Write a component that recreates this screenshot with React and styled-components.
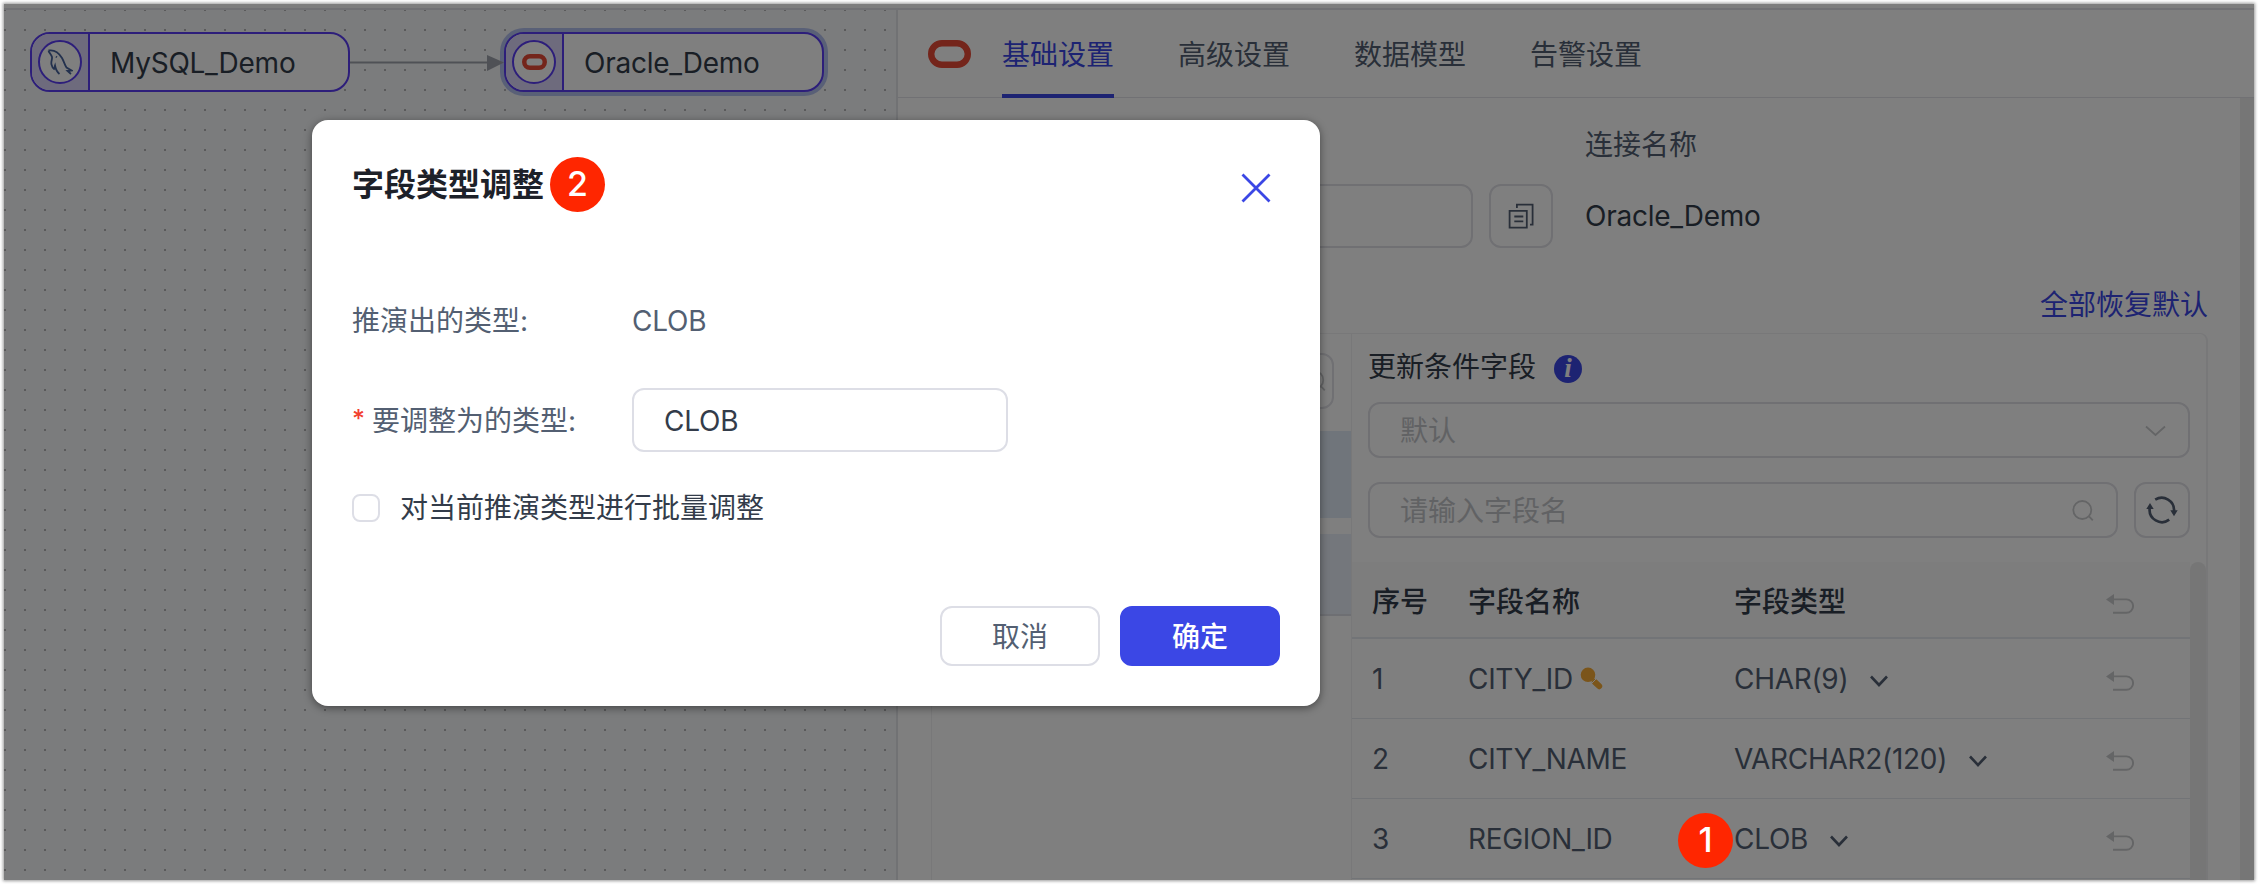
import React from "react";
import styled, { createGlobalStyle } from "styled-components";

const c = {
  primary: "#3b47e5",
  node: "#5a3cf5",
  text: "#333c4a",
  sub: "#535f72",
  border: "#dddee6",
  hint: "#c9cacc",
};

const GlobalStyle = createGlobalStyle`
  * { box-sizing: border-box; }
  body {
    margin: 0;
    background: #fff;
    overflow: hidden;
    font-family: Inter, "Noto Sans CJK SC", sans-serif;
    font-size: 28px;
    line-height: 40px;
    color: ${c.text};
  }
  svg { display: block; flex: none; }
  button, input { font: inherit; color: inherit; }
`;

const Screen = styled.div`
  width: 2258px;
  height: 884px;
  padding: 4px;
  overflow: hidden;
`;

const Window = styled.div`
  position: relative;
  display: flex;
  flex-direction: column;
  height: 876px;
  background: #fff;
  box-shadow: 0 0 3px 1px rgba(0, 0, 0, 0.4);
`;

const TopStrip = styled.div`
  flex: none;
  height: 6px;
  background: #fdfdfd;
  border-bottom: 2px solid #e5e5ea;
`;

const Workspace = styled.div`
  flex: 1;
  min-height: 0;
  display: flex;
  overflow: hidden;
`;

const Canvas = styled.div`
  position: relative;
  flex: none;
  width: 892px;
  background:
    linear-gradient(90deg, transparent 2px, #f7f8fa 2px) 0 -1px / 20px 20px,
    linear-gradient(#b4b5b7 2px, #f7f8fa 2px) 0 -1px / 20px 20px;
`;

const Node = styled.div`
  position: absolute;
  left: ${(p) => p.$x}px;
  top: 22px;
  width: 320px;
  height: 60px;
  display: flex;
  overflow: hidden;
  border: 2px solid ${c.node};
  border-radius: 20px;
  background: #fff;
`;

const Halo = styled.div`
  position: absolute;
  left: ${(p) => p.$x - 4}px;
  top: 18px;
  width: 328px;
  height: 68px;
  border-radius: 24px;
  background: #b3c0ee;
`;

const NodeSide = styled.div`
  width: 58px;
  display: flex;
  align-items: center;
  justify-content: center;
  background: #dcd6fb;
  border-right: 2px solid ${c.node};
`;

const NodeIcon = styled.div`
  width: 44px;
  height: 44px;
  display: flex;
  align-items: center;
  justify-content: center;
  border: 2px solid ${c.node};
  border-radius: 50%;
  background: #fff;
`;

const NodeName = styled.div`
  padding-left: 20px;
  line-height: 58px;
  letter-spacing: -0.25px;
`;

const Edge = styled.svg`
  position: absolute;
  left: 346px;
  top: 44px;
`;

const Panel = styled.div`
  flex: 1;
  display: flex;
  flex-direction: column;
  border-left: 2px solid #e3e4e8;
  background: #fff;
`;

const PanelHeader = styled.div`
  flex: none;
  height: 88px;
  padding-left: 30px;
  display: flex;
  border-bottom: 1px solid #e3e3e8;
`;

const HeaderLogo = styled.div`
  width: 74px;
  padding-top: 30px;
`;

const Tab = styled.div`
  height: 88px;
  margin-right: 64px;
  line-height: 90px;
  color: ${(p) => (p.$active ? c.primary : c.sub)};
  border-bottom: 4px solid ${(p) => (p.$active ? c.primary : "transparent")};
`;

const PanelMain = styled.div`
  flex: 1;
  min-height: 0;
  display: flex;
`;

const PanelBody = styled.div`
  flex: 1;
  padding: 26px 32px 0 33px;
`;

const ScrollTrack = styled.div`
  flex: none;
  width: ${(p) => p.$w}px;
  background: #ededed;
  border-radius: ${(p) => (p.$round ? "8px 8px 0 0" : 0)};
`;

const FormRow = styled.div`
  display: flex;
  gap: 32px;
`;

const Field = styled.div`
  display: flex;
  flex-direction: column;
  gap: 20px;
`;

const FieldLabel = styled.div`
  height: 40px;
  line-height: 42px;
  color: ${c.sub};
`;

const FieldLine = styled.div`
  display: flex;
  align-items: center;
  height: 64px;
  gap: 16px;
  letter-spacing: -0.25px;
`;

const Box = styled.div`
  display: flex;
  align-items: center;
  justify-content: space-between;
  width: ${(p) => p.$w}px;
  height: ${(p) => p.$h}px;
  padding: ${(p) => p.$pad || "0"};
  border: 2px solid #e0e0e6;
  border-radius: 12px;
  color: #c3c5c9;
`;

const IconButton = styled.button`
  display: flex;
  align-items: center;
  justify-content: center;
  flex: none;
  width: ${(p) => p.$s}px;
  height: ${(p) => p.$s}px;
  padding: 0;
  background: #fff;
  border: 2px solid #e0e0e6;
  border-radius: 12px;
`;

const ResetAll = styled.div`
  height: 40px;
  margin: 36px 0 9px;
  line-height: 42px;
  text-align: right;
  color: ${c.primary};
`;

const Group = styled.div`
  display: flex;
  height: 620px;
  border: 1px solid #f0f0f2;
  border-right-width: 2px;
  border-radius: 8px;
`;

const TableList = styled.div`
  width: 420px;
  border-right: 1px solid #f0f0f2;
  padding-top: 19px;
`;

const TableListSearch = styled.div`
  display: flex;
  padding: 0 17px 22px 17px;
`;

const TableItem = styled.div`
  height: ${(p) => p.$h}px;
  margin-bottom: 16px;
  background: ${(p) => p.$bg};
  border-bottom: ${(p) => (p.$line ? "2px solid #dcdfe6" : "0")};
`;

const FieldPane = styled.div`
  flex: 1;
  display: flex;
  flex-direction: column;
`;

const FieldTitle = styled.div`
  display: flex;
  align-items: center;
  gap: 18px;
  height: 64px;
  margin-bottom: 4px;
  padding: 2px 0 0 16px;
`;

const Info = styled.span`
  width: 28px;
  height: 28px;
  margin-top: 4px;
  border-radius: 50%;
  background: ${c.primary};
  color: #fff;
  font: italic bold 27px/26px "Liberation Serif", serif;
  text-align: center;
`;

const Controls = styled.div`
  display: flex;
  gap: 16px;
  padding: 0 16px 24px 16px;
`;

const TableWrap = styled.div`
  flex: 1;
  display: flex;
`;

const Table = styled.div`
  flex: 1;
`;

const Row = styled.div`
  display: grid;
  grid-template-columns: 96px 266px 1fr 28px;
  align-items: center;
  height: ${(p) => (p.$head ? 77 : 80)}px;
  padding: ${(p) => (p.$head ? 4 : 0)}px 56px 0 20px;
  color: ${(p) => (p.$head ? c.text : c.sub)};
  font-weight: ${(p) => (p.$head ? 500 : 400)};
  letter-spacing: ${(p) => (p.$head ? 0 : -0.3)}px;
  background: ${(p) => (p.$head ? "#fafafa" : "#fff")};
  border-bottom: ${(p) => (p.$head ? 2 : 1)}px solid #e4e8ee;
`;

const Cell = styled.div`
  display: flex;
  align-items: center;
  gap: ${(p) => p.$gap || 0}px;
`;

const CellIcon = styled.span`
  padding-top: 5px;
`;

const Mask = styled.div`
  position: absolute;
  inset: 0;
  padding: 116px 0 0 308px;
  background: rgba(0, 0, 0, 0.5);
`;

const Dialog = styled.div`
  width: 1008px;
  height: 586px;
  padding: 40px;
  display: flex;
  flex-direction: column;
  background: #fff;
  border-radius: 16px;
  box-shadow: 0 2px 8px rgba(0, 0, 0, 0.45);
`;

const DialogHead = styled.div`
  display: flex;
  justify-content: space-between;
  height: 48px;
  padding-right: 9px;
  font-size: 32px;
  font-weight: 600;
  line-height: 50px;
  color: #1d2129;
`;

const Close = styled.div`
  padding-top: 13px;
`;

const DialogRow = styled.div`
  display: flex;
  align-items: center;
  height: 64px;
  margin-top: ${(p) => p.$mt}px;
  color: ${c.sub};
  letter-spacing: -0.2px;
`;

const DialogLabel = styled.div`
  display: flex;
  width: 280px;
  padding-top: 1px;
  letter-spacing: 0;
`;

const DialogValue = styled.div`
  padding-top: 1px;
`;

const Required = styled.span`
  width: 20px;
  font-size: 25px;
  font-weight: 500;
  line-height: 36px;
  color: #f2402f;
`;

const TypeInput = styled.input`
  width: 376px;
  height: 64px;
  padding: 1px 30px 0;
  border: 2px solid ${c.border};
  border-radius: 12px;
  color: ${c.text};
  letter-spacing: -0.2px;
  outline: none;
`;

const CheckRow = styled.div`
  display: flex;
  align-items: center;
  gap: 20px;
  height: 40px;
  margin-top: 36px;
`;

const CheckBox = styled.span`
  width: 28px;
  height: 28px;
  border: 2px solid ${c.border};
  border-radius: 8px;
`;

const Footer = styled.div`
  display: flex;
  justify-content: flex-end;
  gap: 20px;
  margin-top: auto;
`;

const Button = styled.button`
  width: 160px;
  height: 60px;
  padding: 1px 0 0;
  border: 2px solid ${(p) => (p.$primary ? c.primary : c.border)};
  border-radius: 12px;
  background: ${(p) => (p.$primary ? c.primary : "#fff")};
  color: ${(p) => (p.$primary ? "#fff" : c.sub)};
  font-weight: ${(p) => (p.$primary ? 500 : 400)};
`;

const Badge = styled.div`
  position: absolute;
  left: ${(p) => p.$x}px;
  top: ${(p) => p.$y}px;
  width: 55px;
  height: 55px;
  border-radius: 50%;
  background: #ff2600;
  color: #fff;
  font-size: 34px;
  font-weight: 500;
  line-height: 54px;
  text-align: center;
`;

const OracleLogo = ({ w, h, s }) => (
  <svg width={w} height={h} fill="none" stroke="#e84a36" strokeWidth={s}>
    <rect x={s / 2} y={s / 2} width={w - s} height={h - s} rx={(h - s) / 2} />
  </svg>
);

const Dolphin = () => (
  <svg width="26" height="26" viewBox="0 0 26 26" fill="none" stroke="#46639c" strokeWidth="1.8">
    <path d="M1.5 1.5C7 .5 12 4 15 9c2 3.500 2.500 6.500 4.500 9.500L24.500 21.500 20.500 22 24 25M1.500 1.500C2 4 4.500 5.500 5 8c.4 2.500-1.300 4.500-.5 7.500.6 2.300 1.500 4 2.500 4.500.8-1 .6-2.500 1-3.500.8 4 2.500 7 4.500 8.500" />
    <path d="M9 7.500l.8.800" />
  </svg>
);

const CopyIcon = () => (
  <svg width="27" height="27" viewBox="0 0 27 27" fill="none" stroke={c.sub} strokeWidth="1.8">
    <path d="M1.600 7.800h17.200v16.800H1.600zM6.300 13.500h9M6.300 18.300h9M8.900 5V1.600h15.700v20H22" />
  </svg>
);

const SearchIcon = () => (
  <svg width="22" height="22" viewBox="0 0 22 22" fill="none" stroke={c.hint} strokeWidth="1.8">
    <circle cx="10.300" cy="10" r="9" />
    <path d="M16.800 16.200l4 4.200" />
  </svg>
);

const Chevron = ({ color = c.sub, w = 18, s = 2.6 }) => (
  <svg width={w} height="12" viewBox={`0 0 ${w} 12`} fill="none" stroke={color} strokeWidth={s}>
    <path d={`M1 1.500L${w / 2} 10 ${w - 1} 1.500`} />
  </svg>
);

const RefreshIcon = () => (
  <svg width="32" height="30" viewBox="0 0 32 30" fill="none" stroke={c.sub} strokeWidth="2.700">
    <path d="M9.200 4.700A12.300 12.300 0 0 1 28 16M23.200 24.700A12.300 12.300 0 0 1 3.700 13.300" />
    <path d="M24.300 15.300h7.400L28 21.300zM.3 14h7.400L4 8z" fill={c.sub} stroke="none" />
  </svg>
);

const UndoIcon = () => (
  <svg width="28" height="20" viewBox="0 0 28 20" fill="none" stroke={c.hint} strokeWidth="1.900">
    <path d="M7 5.400h13.400a6.700 6.700 0 0 1 0 13.400H7" />
    <path d="M0 5.500L8 0v11z" fill={c.hint} stroke="none" />
  </svg>
);

const KeyIcon = () => (
  <svg width="23" height="23" viewBox="0 0 23 23">
    <circle cx="8" cy="7.800" r="7.300" fill="#f6ab34" />
    <path d="M14.800 15l4.400 4.200" stroke="#f6ab34" strokeWidth="6" strokeLinecap="round" />
    <path d="M11.500 16.500l5-5" stroke="#fff" strokeWidth="1" />
  </svg>
);

const CloseIcon = () => (
  <svg width="30" height="30" viewBox="0 0 30 30" stroke={c.primary} strokeWidth="2.800">
    <path d="M1.500 1.500l27 27M28.500 1.500l-27 27" />
  </svg>
);

const tabs = ["基础设置", "高级设置", "数据模型", "告警设置"];
const fields = [
  { name: "CITY_ID", type: "CHAR(9)", key: true },
  { name: "CITY_NAME", type: "VARCHAR2(120)" },
  { name: "REGION_ID", type: "CLOB" },
];

export default function App() {
  return (
    <Screen>
      <GlobalStyle />
      <Window>
        <TopStrip />
        <Workspace>
          <Canvas>
            <Halo $x={500} />
            <Edge width="154" height="18">
              <path d="M0 8.500h138" stroke="#9ea3ac" strokeWidth="2" />
              <path d="M137 1l17 7.500-17 8.500z" fill="#9ea3ac" />
            </Edge>
            <Node $x={26}>
              <NodeSide>
                <NodeIcon><Dolphin /></NodeIcon>
              </NodeSide>
              <NodeName>MySQL_Demo</NodeName>
            </Node>
            <Node $x={500}>
              <NodeSide>
                <NodeIcon><OracleLogo w={25} h={16} s={4.5} /></NodeIcon>
              </NodeSide>
              <NodeName>Oracle_Demo</NodeName>
            </Node>
          </Canvas>
          <Panel>
            <PanelHeader>
              <HeaderLogo><OracleLogo w={43} h={28} s={6.4} /></HeaderLogo>
              {tabs.map((t, i) => (
                <Tab key={t} $active={i === 0}>{t}</Tab>
              ))}
            </PanelHeader>
            <PanelMain>
              <PanelBody>
                <FormRow>
                  <Field>
                    <FieldLabel />
                    <FieldLine>
                      <Box $w={542} $h={64} />
                      <IconButton $s={64}><CopyIcon /></IconButton>
                    </FieldLine>
                  </Field>
                  <Field>
                    <FieldLabel>连接名称</FieldLabel>
                    <FieldLine>Oracle_Demo</FieldLine>
                  </Field>
                </FormRow>
                <ResetAll>全部恢复默认</ResetAll>
                <Group>
                  <TableList>
                    <TableListSearch>
                      <Box $w={386} $h={56} $pad="0 6px 0 30px">
                        <span />
                        <SearchIcon />
                      </Box>
                    </TableListSearch>
                    <TableItem $h={87} $bg="#e0eaf6" />
                    <TableItem $h={82} $bg="#e8eff8" $line />
                  </TableList>
                  <FieldPane>
                    <FieldTitle>
                      更新条件字段
                      <Info>i</Info>
                    </FieldTitle>
                    <Controls>
                      <Box $w={822} $h={56} $pad="2px 22px 0 30px">
                        默认
                        <Chevron color={c.hint} w={21} s={1.8} />
                      </Box>
                    </Controls>
                    <Controls>
                      <Box $w={750} $h={56} $pad="2px 22px 0 30px">
                        请输入字段名
                        <SearchIcon />
                      </Box>
                      <IconButton $s={56}><RefreshIcon /></IconButton>
                    </Controls>
                    <TableWrap>
                      <Table>
                        <Row $head>
                          <Cell>序号</Cell>
                          <Cell>字段名称</Cell>
                          <Cell>字段类型</Cell>
                          <CellIcon><UndoIcon /></CellIcon>
                        </Row>
                        {fields.map((f, i) => (
                          <Row key={f.name}>
                            <Cell>{i + 1}</Cell>
                            <Cell $gap={7}>
                              {f.name}
                              {f.key && <KeyIcon />}
                            </Cell>
                            <Cell $gap={22}>
                              {f.type}
                              <CellIcon><Chevron /></CellIcon>
                            </Cell>
                            <CellIcon><UndoIcon /></CellIcon>
                          </Row>
                        ))}
                      </Table>
                      <ScrollTrack $w={16} $round />
                    </TableWrap>
                  </FieldPane>
                </Group>
              </PanelBody>
              <ScrollTrack $w={14} />
            </PanelMain>
          </Panel>
        </Workspace>
        <Mask>
          <Dialog>
            <DialogHead>
              字段类型调整
              <Close><CloseIcon /></Close>
            </DialogHead>
            <DialogRow $mt={80}>
              <DialogLabel>推演出的类型:</DialogLabel>
              <DialogValue>CLOB</DialogValue>
            </DialogRow>
            <DialogRow $mt={36}>
              <DialogLabel><Required>*</Required>要调整为的类型:</DialogLabel>
              <TypeInput defaultValue="CLOB" />
            </DialogRow>
            <CheckRow>
              <CheckBox />
              对当前推演类型进行批量调整
            </CheckRow>
            <Footer>
              <Button>取消</Button>
              <Button $primary>确定</Button>
            </Footer>
          </Dialog>
        </Mask>
        <Badge $x={546} $y={153}>2</Badge>
        <Badge $x={1674} $y={809}>1</Badge>
      </Window>
    </Screen>
  );
}
